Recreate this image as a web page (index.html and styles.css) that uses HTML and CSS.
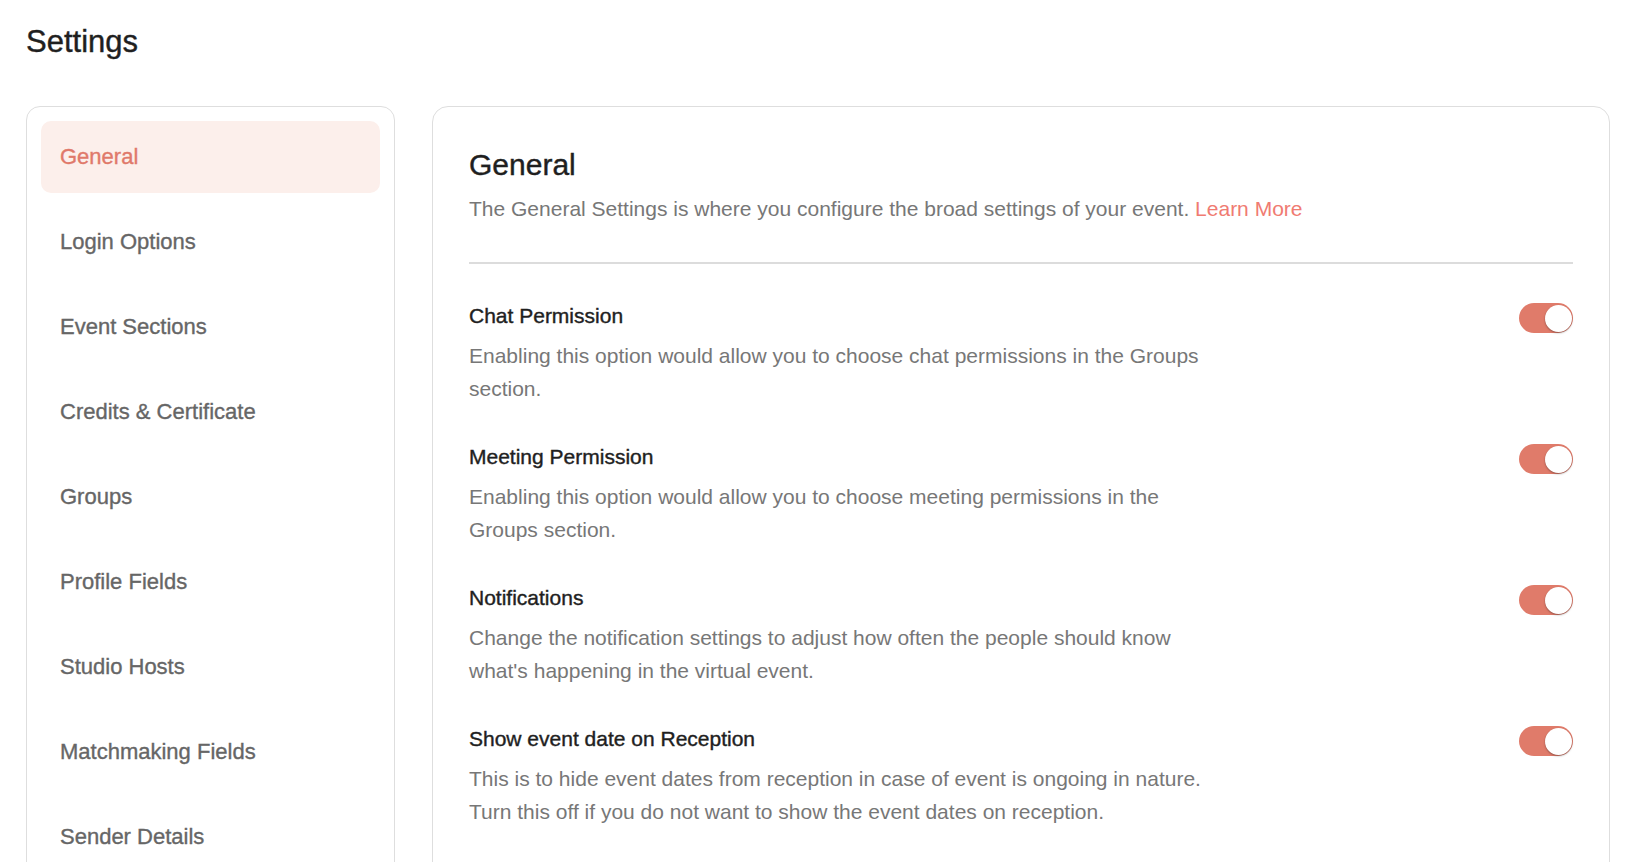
FILE: index.html
```html
<!DOCTYPE html>
<html lang="en">
<head>
  <meta charset="UTF-8" />
  <meta name="viewport" content="width=device-width, initial-scale=1.0" />
  <title>Settings</title>
  <link rel="stylesheet" href="styles.css">
</head>
<body>
  <div class="page">
    <h1 class="page-title">Settings</h1>

    <div class="layout">
      <nav class="menu">
        <a class="menu-item active" href="#">General</a>
        <a class="menu-item" href="#">Login Options</a>
        <a class="menu-item" href="#">Event Sections</a>
        <a class="menu-item" href="#">Credits &amp; Certificate</a>
        <a class="menu-item" href="#">Groups</a>
        <a class="menu-item" href="#">Profile Fields</a>
        <a class="menu-item" href="#">Studio Hosts</a>
        <a class="menu-item" href="#">Matchmaking Fields</a>
        <a class="menu-item" href="#">Sender Details</a>
      </nav>

      <section class="panel">
        <h2>General</h2>
        <p class="intro">The General Settings is where you configure the broad settings of your event. <a href="#">Learn More</a></p>
        <hr class="divider">

        <div class="option">
          <div class="option-text">
            <h3>Chat Permission</h3>
            <p>Enabling this option would allow you to choose chat permissions in the Groups section.</p>
          </div>
          <label class="switch"><input type="checkbox" checked><span class="slider"></span></label>
        </div>

        <div class="option">
          <div class="option-text">
            <h3>Meeting Permission</h3>
            <p>Enabling this option would allow you to choose meeting permissions in the Groups section.</p>
          </div>
          <label class="switch"><input type="checkbox" checked><span class="slider"></span></label>
        </div>

        <div class="option">
          <div class="option-text">
            <h3>Notifications</h3>
            <p>Change the notification settings to adjust how often the people should know what's happening in the virtual event.</p>
          </div>
          <label class="switch"><input type="checkbox" checked><span class="slider"></span></label>
        </div>

        <div class="option">
          <div class="option-text">
            <h3>Show event date on Reception</h3>
            <p>This is to hide event dates from reception in case of event is ongoing in nature. Turn this off if you do not want to show the event dates on reception.</p>
          </div>
          <label class="switch"><input type="checkbox" checked><span class="slider"></span></label>
        </div>
      </section>
    </div>
  </div>
</body>
</html>
```

FILE: styles.css
```css
body {
  margin: 0;
  background: #fff;
  color: #1f1f1f;
  font-family: "Liberation Sans", Arial, sans-serif;
}
.page {
  height: 100vh;
  overflow: hidden;
  padding: 24px 26px 0;
  box-sizing: border-box;
}
.page-title {
  margin: 0 0 46px;
  font-size: 31px;
  line-height: 36px;
  font-weight: 500;
  -webkit-text-stroke: 0.4px #1f1f1f;
}
.layout {
  display: grid;
  grid-template-columns: 369px 1fr;
  gap: 37px;
  align-items: start;
}
.menu {
  display: flex;
  flex-direction: column;
  gap: 13px;
  padding: 14px;
  border: 1px solid #dedede;
  border-radius: 14px;
}
.menu-item {
  display: flex;
  align-items: center;
  height: 72px;
  padding: 0 19px;
  border-radius: 10px;
  color: #666;
  font-size: 22px;
  font-weight: 500;
  text-decoration: none;
  -webkit-text-stroke: 0.35px #666;
}
.menu-item.active {
  background: #fcefeb;
  color: #e0796a;
  -webkit-text-stroke-color: #e0796a;
}
.panel {
  padding: 40px 36px 60px;
  border: 1px solid #dedede;
  border-radius: 16px;
}
.panel h2 {
  margin: 0;
  font-size: 30px;
  line-height: 36px;
  font-weight: 500;
  -webkit-text-stroke: 0.4px #1f1f1f;
}
.intro {
  margin: 10px 0 0;
  color: #777;
  font-size: 21px;
  line-height: 32px;
}
.intro a {
  color: #f07b72;
  text-decoration: none;
}
.divider {
  margin: 37px 0 40px;
  border: none;
  border-top: 2px solid #dcdcdc;
}
.option {
  display: flex;
  justify-content: space-between;
  align-items: flex-start;
  margin-bottom: 40px;
}
.option h3 {
  margin: 0;
  font-size: 21px;
  line-height: 24px;
  font-weight: 500;
  color: #1f1f1f;
  -webkit-text-stroke: 0.4px #1f1f1f;
}
.option p {
  max-width: 745px;
  margin: 11px 0 0;
  color: #777;
  font-size: 21px;
  line-height: 33px;
}
.switch {
  position: relative;
  display: block;
  width: 54px;
  height: 30px;
  margin-top: -1px;
}
.switch input {
  display: none;
}
.slider {
  position: absolute;
  inset: 0;
  background: #e07b6a;
  border-radius: 15px;
  cursor: pointer;
}
.slider::after {
  content: "";
  position: absolute;
  top: 1.5px;
  right: 1.5px;
  width: 27px;
  height: 27px;
  background: #fff;
  border-radius: 50%;
  box-shadow: 0 1px 2px rgba(0, 0, 0, 0.35);
}
```
